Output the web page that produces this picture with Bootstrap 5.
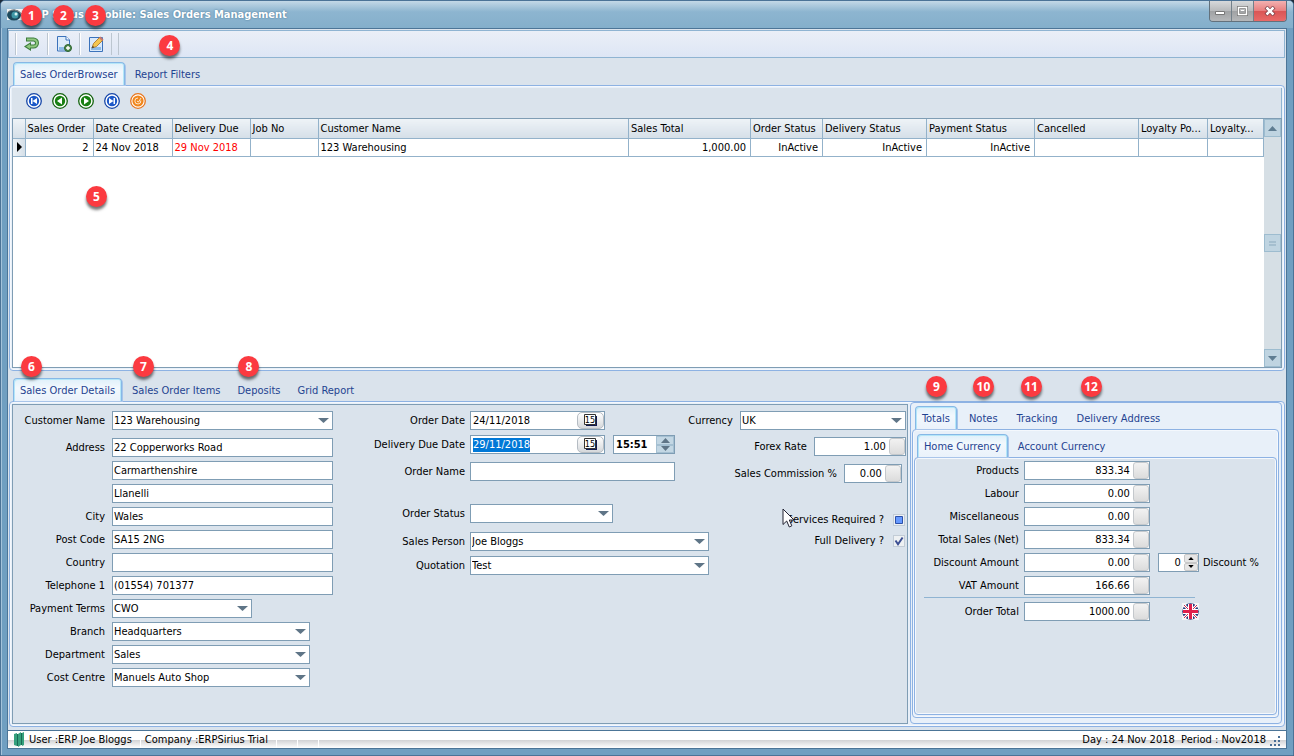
<!DOCTYPE html>
<html lang="en">
<head>
<meta charset="utf-8">
<meta name="viewport" content="width=device-width, initial-scale=1">
<title>Sales Orders Management</title>
<link href="https://cdn.jsdelivr.net/npm/bootstrap@5.3.0/dist/css/bootstrap.min.css" rel="stylesheet">
<style>
:root{--face:#dae3ec;--line:#7f9db4;--tabline:#8db2e3;--pale:#e8f0f9;--tabtext:#1f4391;--fieldw:221px}
body{font:11px/14px "DejaVu Sans Condensed","DejaVu Sans",sans-serif;color:#000;background:#1d2b3a;margin:0}
svg{display:block}
button{font:inherit}
.app-window{min-height:100vh;background:#709fc1;border:1px solid #4b7397;border-radius:5px 5px 0 0;padding:0 6px 6px;box-shadow:inset 1px 0 #a4c3da}
.titlebar{height:27px;margin:0 -6px;padding:0 6px;background:linear-gradient(#c3d8e7,#8db5d0 40%,#84afcb);border-radius:4px 4px 0 0;color:#fff;font-weight:bold;text-shadow:0 0 2px #44718f}
.win-buttons{height:21px;border:1px solid #63717c;border-top:0;border-radius:0 0 4px 4px;overflow:hidden}
.win-buttons button{width:22px;height:20px;border:0;border-right:1px solid #73808a;padding:0;background:linear-gradient(#d7d9db,#b8babc 48%,#9fa1a3 50%,#b5b7b9)}
.win-buttons .close-btn{width:32px;border-right:0;background:linear-gradient(#f2b1b1,#e88080 48%,#d95555 50%,#e96a68)}
.client{flex:1;background:var(--face);border:1px solid #4c7597;padding-top:1px}
.toolstrip{height:28px;border:1px solid #8fb4d2;background:linear-gradient(#eaeff7,#dde6f5);padding-left:6px;margin-right:1px}
.toolstrip button{width:32px;height:22px;border:0;border-left:1px solid #bcc6d0;padding:0;background:none;box-shadow:inset 1px 0 #fff}
.toolstrip .grip{width:8px;height:22px;border:solid #bcc6d0;border-width:0 1px}
.marker{position:absolute;z-index:3;width:21px;height:21px;border-radius:50%;background:#fb3a40;color:#fff;font:bold 12px/21px "Noto Sans","Open Sans",sans-serif;text-align:center;box-shadow:0 3px 3px rgba(0,0,0,.55);pointer-events:none}
.tool-mark{left:5px;top:-28px}
.tab-mark{left:7px;top:-23px}
.side-mark{left:10px;top:-31px}
.mid-mark{left:50%;margin-left:-8px;top:-28px}
.grid-mark{left:73px;top:67px}
.tabset{gap:1px;padding-left:5px;border:0;position:relative;z-index:1}
.tabset .nav-link{height:23px;padding:4px 6px 3px;border:1px solid transparent;border-radius:4px 4px 0 0;color:var(--tabtext);line-height:16px;margin:0;position:relative;white-space:nowrap}
.tabset .nav-link.active{color:var(--tabtext);border-color:#86b8e6;border-bottom:0;background:linear-gradient(#dff0fa,#f2f8fd 40%,#eaf2fb);box-shadow:inset 1px 1px #b4e6f8,inset -1px 0 #b4e6f8,1px 1px #a9c5ea;padding-bottom:4px}
.tabset .nav-item+.nav-item{margin-left:2px}
.pane{border:1px solid var(--tabline);border-radius:4px;box-shadow:inset 0 0 0 1px #f4f8fd;background:var(--pale);padding:2px}
.browser-pane{flex:1;margin:0 1px}
.nav-strip{height:30px;padding:0 0 4px 14px;gap:10px;background:var(--face);border-right:1px solid #8fb4d2}
.nav-strip button{border:0;padding:0;background:none}
.grid-box{flex:1;border:1px solid var(--line);background:#fff;min-height:180px}
.order-grid{table-layout:fixed;width:100%;margin:0;line-height:14px}
.order-grid th,.order-grid td{height:18px;padding:2px 2px 1px;font-weight:normal;border:1px solid #93b2ca;border-width:0 1px 1px 0;white-space:nowrap;overflow:hidden}
.order-grid th{background:linear-gradient(#eef3f7,#d5dfe8);height:19px}
.order-grid .num{text-align:right;padding-right:4px}
.order-grid .late{color:#f00}
.order-grid .row-head{background:linear-gradient(90deg,#eef3f7,#d5dfe8);padding:0 0 0 3px}
.c-ind{width:12px}.c-68{width:68px}.c-69{width:69px}.c-79{width:79px}.c-78{width:78px}.c-122{width:122px}.c-72{width:72px}.c-104{width:104px}.c-108{width:108px}.c-56{width:56px}
.vscroll{width:17px;flex:none;background:#d6dfe5}
.vscroll button{height:18px;border:1px solid #9dbccf;padding:0;background:#bfd4e1}
.details-row{margin-top:7px}
.details-pane{margin:0 1px 3px}
.details-box{flex:1 1 0;min-width:0;border:1px solid var(--line);background:var(--face);padding:6px 1px 36px 0;gap:32px}
.fields{gap:4px}
.fields.loose{gap:5px}
.t2{margin-top:2px}.t3{margin-top:3px}.t4{margin-top:4px}.t18{margin-top:18px}
.f-row{display:flex;align-items:center;height:19px}
.f-row>label{text-align:right;white-space:nowrap;margin-right:7px;flex:none}
.lab-a>.f-row>label{width:92px}
.lab-b{flex:1 1 0;min-width:0}
.lab-b>.f-row>label{width:100px;margin-right:5px}
.lab-c>.f-row>label{width:104px;margin-right:5px}
.ticks{gap:2px;margin-top:22px}
.fld{flex:none;height:19px;border:1px solid var(--line);border-radius:0;background:#fff;color:#000;padding:0 0 1px 1px;font:inherit;min-width:0;outline:0}
.combo input::selection{background:#0078d7;color:#fff}
.wide{width:var(--fieldw)}
.w140{width:140px}.w198{width:198px}.w205{width:205px}.w143{width:143px}.w239{width:239px}.w166{width:166px}.w126{width:126px}.w92{width:92px}.w58{width:58px}.w135{width:135px}.w62{width:62px}.w41{width:41px}
select.fld{appearance:none;padding:0 0 0 1px;background:#fff url("data:image/svg+xml,%3Csvg xmlns='http://www.w3.org/2000/svg' width='11' height='5'%3E%3Cpath d='M0 0h11L5.500 5z' fill='%235f7587'/%3E%3C/svg%3E") no-repeat right 3px center}
.combo{display:flex;align-items:stretch;padding:0}
.combo input{flex:1;width:0;border:0;outline:0;padding:0 0 0 2px;font:inherit;background:none}
.combo .right{text-align:right;padding-right:3px}
.combo .pop{width:16px;margin:0;border:1px solid #c4c8cc;border-radius:3px;background:linear-gradient(#f2f2f2,#dcdcdc);padding:0}
.combo .cal{width:27px;border:1px solid #b5bcc3;border-radius:5px;background:linear-gradient(#fff,#d5d8db);padding:0 0 0 6px}
.cal text{font:9px "DejaVu Sans Condensed",sans-serif}
.spin{display:flex;flex-direction:column;width:18px}
.spin button{flex:1;border:1px solid #a5c0d2;background:#c3d7e4;padding:0;display:flex;align-items:center;justify-content:center;min-height:0}
.spin.grey{width:14px}.spin.grey button{background:#e6e6e6;border-color:#c8c8c8;border-radius:2px}
.tick{appearance:none;width:12px;height:12px;border:1px solid #c2ccd6;background:#eef1f3 center/10px no-repeat;margin:0 1px 0 9px;flex:none}
.tick.filled{background-image:url("data:image/svg+xml,%3Csvg xmlns='http://www.w3.org/2000/svg' width='10' height='10'%3E%3Cpath d='M1.500 1.500h7v7h-7z' fill='%236699ff' stroke='%232d51a8'/%3E%3C/svg%3E")}
.tick.checked{background-image:url("data:image/svg+xml,%3Csvg xmlns='http://www.w3.org/2000/svg' width='10' height='10'%3E%3Cpath d='M1.500 4.500L4 8.200 8.600 1.500' fill='none' stroke='%233c4f93' stroke-width='2'/%3E%3C/svg%3E")}
.pointer{position:absolute;left:-5px;top:-2px}
.totals-side{flex:0 0 29.3%;min-width:0;margin:-2px 0 0 2px;border:1px solid var(--tabline);border-radius:4px;background:var(--pale);padding:3px 2px 5px 1px}
.totals-side .tabset{padding-left:3px}
.totals-side>.tabset{gap:3px}
.totals-pane{flex:1;padding:4px 1px 2px}
.currency-pane{flex:1;background:var(--face);padding:3px 0 0}
.rule{border-top:1px solid #8fb4d2;width:271px;margin:-2px 0 0 9px}
.statusbar{height:19px;margin:0 -1px -1px;padding:0 4px 0 6px;border:1px solid #4c7597;background:linear-gradient(#fff 50%,#d0d1d3 52%,#fff)}
.cell{border-right:1px solid #fff;height:17px;line-height:17px;white-space:pre}
.w21{width:21px}
</style>
</head>
<body>
<svg width="0" height="0" class="position-absolute" aria-hidden="true">
 <symbol id="up" viewBox="0 0 9 5"><path d="M0 5h9L4.500 0z"/></symbol>
 <symbol id="down" viewBox="0 0 9 5"><path d="M0 0h9L4.500 5z"/></symbol>
 <symbol id="cal" viewBox="0 0 13 13"><path d="M2 2h11v10H2z" fill="#111a50"/><path d="M.5.500h11v10H.5z" fill="#fff" stroke="#333"/></symbol>
</svg>
<div class="app-window d-flex flex-column">
 <header class="titlebar d-flex justify-content-between align-items-start">
  <div class="d-flex align-items-center h-100 gap-1">
   <svg width="16" height="14" viewBox="0 0 16 14"><path d="M0 1h16v11H0z" fill="#f4f4f4"/><ellipse cx="7" cy="7" rx="7" ry="5.500" fill="#1e4a5d"/><circle cx="8" cy="7" r="3.500" fill="#3f97a6"/><circle cx="9" cy="6" r="1.500" fill="#d4f2f2"/><path d="M1 4Q7-1 15 6" fill="none" stroke="#888"/></svg>
   <span>ERP Sirius - Mobile: Sales Orders Management</span>
  </div>
  <div class="win-buttons d-flex">
   <button type="button" aria-label="Minimise"><svg class="m-auto" width="11" height="10"><path d="M.5 5.500h9v3h-9z" fill="#fff" stroke="#777"/></svg></button>
   <button type="button" aria-label="Maximise"><svg class="m-auto" width="11" height="10"><path d="M1.500 1.500h8v7h-8z" fill="none" stroke="#777" stroke-width="3"/><path d="M1.500 1.500h8v7h-8z" fill="none" stroke="#fff" stroke-width="1.500"/><path d="M4 4.500h3" stroke="#fff"/></svg></button>
   <button type="button" class="close-btn" aria-label="Close"><svg class="m-auto" width="12" height="10"><path d="M2 1l8 8M10 1L2 9" stroke="#7a3c44" stroke-width="4"/><path d="M2.500 1.500l7 7M9.500 1.500l-7 7" stroke="#fff" stroke-width="2.500"/></svg></button>
  </div>
 </header>
 <main class="client d-flex flex-column">
  <div class="toolstrip d-flex align-items-center">
   <button type="button" class="position-relative" aria-label="Back"><svg class="m-auto" width="18" height="16" viewBox="0 0 18 16"><path d="M3 3.500h7.500a3.500 3.500 0 0 1 0 7H6" fill="none" stroke="#3c7d3c" stroke-width="4"/><path d="M8 6v9L1 10.500z" fill="#3c7d3c"/><path d="M4 3.500h6.500a3.500 3.500 0 0 1 0 7H5" fill="none" stroke="#8fc77f" stroke-width="2"/><path d="M7 8v5L3 10.500z" fill="#8fc77f"/></svg><span class="marker tool-mark">1</span></button>
   <button type="button" class="position-relative" aria-label="New order"><svg class="m-auto" width="16" height="16" viewBox="0 0 16 16"><path d="M1.500.500H10L13.500 4v11h-12z" fill="#dcebfa" stroke="#3b72bb"/><path d="M3 11h8v3H3z" fill="#8dbbe8"/><path d="M10 .5V4h3.500" fill="#fff" stroke="#3b72bb"/><circle cx="12" cy="12" r="3.500" fill="#4d8a4b" stroke="#2f6430"/><path d="M12 10v4M10 12h4" stroke="#fff" stroke-width="1.400"/></svg><span class="marker tool-mark">2</span></button>
   <button type="button" class="position-relative" aria-label="Edit order"><svg class="m-auto" width="16" height="16" viewBox="0 0 16 16"><path d="M1.500 1.500h13v14h-13z" fill="#d9e9fa" stroke="#3b72bb"/><path d="M3 11h10v3H3z" fill="#8dbbe8"/><path d="M4 12l1.500-4.500L12 1l3 3-6.500 6.500z" fill="#f4c64f" stroke="#a66d23" stroke-width=".8"/><path d="M4 12l.8-2.200 1.400 1.400z" fill="#333"/><path d="M11 2l3 3 1.500-1.500-3-3z" fill="#c97870"/></svg><span class="marker tool-mark">3</span></button>
   <div class="grip"></div>
  </div>
  <ul class="nav nav-tabs tabset mt-1">
   <li class="nav-item"><button type="button" class="nav-link active">Sales OrderBrowser</button></li>
   <li class="nav-item"><button type="button" class="nav-link">Report Filters<span class="marker mid-mark">4</span></button></li>
  </ul>
  <section class="pane browser-pane d-flex flex-column">
   <div class="nav-strip d-flex align-items-center">
    <button type="button" aria-label="First"><svg width="16" height="16" viewBox="0 0 16 16"><circle cx="8" cy="8" r="7.300" fill="#fff" stroke="#1646a8" stroke-width="1.300"/><circle cx="8" cy="8" r="5.200" fill="#1c58c8"/><path d="M5 5h1.500v6H5zM11 5v6L6.500 8z" fill="#fff"/></svg></button>
    <button type="button" aria-label="Previous"><svg width="16" height="16" viewBox="0 0 16 16"><circle cx="8" cy="8" r="7.300" fill="#fff" stroke="#12630e" stroke-width="1.300"/><circle cx="8" cy="8" r="5.200" fill="#188012"/><path d="M10 4.500v7L5 8z" fill="#fff"/></svg></button>
    <button type="button" aria-label="Next"><svg width="16" height="16" viewBox="0 0 16 16"><circle cx="8" cy="8" r="7.300" fill="#fff" stroke="#12630e" stroke-width="1.300"/><circle cx="8" cy="8" r="5.200" fill="#188012"/><path d="M6 4.500v7L11 8z" fill="#fff"/></svg></button>
    <button type="button" aria-label="Last"><svg width="16" height="16" viewBox="0 0 16 16"><circle cx="8" cy="8" r="7.300" fill="#fff" stroke="#1646a8" stroke-width="1.300"/><circle cx="8" cy="8" r="5.200" fill="#1c58c8"/><path d="M11 5H9.500v6H11zM5 5v6l4.500-3z" fill="#fff"/></svg></button>
    <button type="button" aria-label="Refresh"><svg width="16" height="16" viewBox="0 0 16 16"><circle cx="8" cy="8" r="7.300" fill="#fff" stroke="#e8761e" stroke-width="1.300"/><circle cx="8" cy="8" r="5.600" fill="#f0861c"/><path d="M10.800 7.500A3 3 0 1 1 8 5" fill="none" stroke="#ffe9cf"/><path d="M7 8l1.500 1L11 5" fill="none" stroke="#ffe9cf"/></svg></button>
   </div>
   <div class="grid-box d-flex position-relative">
    <div class="flex-grow-1">
     <table class="order-grid">
      <colgroup><col class="c-ind"><col class="c-68"><col class="c-79"><col class="c-78"><col class="c-68"><col><col class="c-122"><col class="c-72"><col class="c-104"><col class="c-108"><col class="c-104"><col class="c-69"><col class="c-56"></colgroup>
      <thead><tr><th></th><th>Sales Order</th><th>Date Created</th><th>Delivery Due</th><th>Job No</th><th>Customer Name</th><th>Sales Total</th><th>Order Status</th><th>Delivery Status</th><th>Payment Status</th><th>Cancelled</th><th>Loyalty Po...</th><th>Loyalty...</th></tr></thead>
      <tbody><tr><td class="row-head"><svg width="6" height="10"><path d="M1 0l5 5-5 5z"/></svg></td><td class="num">2</td><td>24 Nov 2018</td><td class="late">29 Nov 2018</td><td></td><td>123 Warehousing</td><td class="num">1,000.00</td><td class="num">InActive</td><td class="num">InActive</td><td class="num">InActive</td><td></td><td></td><td></td></tr></tbody>
     </table>
    </div>
    <div class="vscroll d-flex flex-column justify-content-between">
     <button type="button" aria-label="Scroll up"><svg class="m-auto" width="9" height="5" fill="#5f7d92"><use href="#up"/></svg></button>
     <button type="button" aria-label="Scroll position"><svg class="m-auto" width="7" height="5"><path d="M0 1h7M0 4h7" stroke="#8aa9bd"/></svg></button>
     <button type="button" aria-label="Scroll down"><svg class="m-auto" width="9" height="5" fill="#5f7d92"><use href="#down"/></svg></button>
    </div>
    <span class="marker grid-mark">5</span>
   </div>
  </section>
  <ul class="nav nav-tabs tabset details-row">
   <li class="nav-item"><button type="button" class="nav-link active">Sales Order Details<span class="marker tab-mark">6</span></button></li>
   <li class="nav-item"><button type="button" class="nav-link">Sales Order Items<span class="marker tab-mark">7</span></button></li>
   <li class="nav-item"><button type="button" class="nav-link">Deposits<span class="marker tab-mark">8</span></button></li>
   <li class="nav-item"><button type="button" class="nav-link">Grid Report</button></li>
  </ul>
  <section class="pane details-pane d-flex">
   <form class="details-box d-flex">
    <div class="fields lab-a d-flex flex-column">
     <div class="f-row"><label for="cust">Customer Name</label><select id="cust" class="fld wide"><option>123 Warehousing</option></select></div>
     <div class="f-row t4"><label for="ad1">Address</label><input id="ad1" class="fld wide" value="22 Copperworks Road"></div>
     <div class="f-row"><label for="ad2"></label><input id="ad2" aria-label="Address line 2" class="fld wide" value="Carmarthenshire"></div>
     <div class="f-row"><label for="ad3"></label><input id="ad3" aria-label="Address line 3" class="fld wide" value="Llanelli"></div>
     <div class="f-row"><label for="city">City</label><input id="city" class="fld wide" value="Wales"></div>
     <div class="f-row"><label for="post">Post Code</label><input id="post" class="fld wide" value="SA15 2NG"></div>
     <div class="f-row"><label for="ctry">Country</label><input id="ctry" class="fld wide"></div>
     <div class="f-row"><label for="tel">Telephone 1</label><input id="tel" class="fld wide" value="(01554) 701377"></div>
     <div class="f-row"><label for="terms">Payment Terms</label><select id="terms" class="fld w140"><option>CWO</option></select></div>
     <div class="f-row"><label for="branch">Branch</label><select id="branch" class="fld w198"><option>Headquarters</option></select></div>
     <div class="f-row"><label for="dept">Department</label><select id="dept" class="fld w198"><option>Sales</option></select></div>
     <div class="f-row"><label for="cost">Cost Centre</label><select id="cost" class="fld w198"><option>Manuels Auto Shop</option></select></div>
    </div>
    <div class="fields loose lab-b d-flex flex-column">
     <div class="f-row"><label for="odate">Order Date</label><div class="fld combo w135"><input id="odate" value="24/11/2018"><button type="button" class="cal" aria-label="Pick order date"><svg width="13" height="13"><use href="#cal"/><text x="6" y="9" text-anchor="middle">15</text></svg></button></div></div>
     <div class="f-row"><label for="ddate">Delivery Due Date</label><div class="fld combo w135"><input id="ddate" value="29/11/2018"><button type="button" class="cal" aria-label="Pick delivery date"><svg width="13" height="13"><use href="#cal"/><text x="6" y="9" text-anchor="middle">15</text></svg></button></div>
      <div class="fld combo w62 ms-2"><input value="15:51" class="fw-bold" aria-label="Delivery time"><span class="spin"><button type="button" aria-label="Later"><svg width="9" height="5" fill="#5f7587"><use href="#up"/></svg></button><button type="button" aria-label="Earlier"><svg width="9" height="5" fill="#5f7587"><use href="#down"/></svg></button></span></div></div>
     <div class="f-row t3"><label for="oname">Order Name</label><input id="oname" class="fld w205"></div>
     <div class="f-row t18"><label for="ostat">Order Status</label><select id="ostat" class="fld w143"><option></option></select></div>
     <div class="f-row t4"><label for="person">Sales Person</label><select id="person" class="fld w239"><option>Joe Bloggs</option></select></div>
     <div class="f-row"><label for="quote">Quotation</label><select id="quote" class="fld w239"><option>Test</option></select></div>
    </div>
    <div class="fields loose d-flex flex-column align-items-end">
     <div class="f-row"><label for="curr">Currency</label><select id="curr" class="fld w166"><option>UK</option></select></div>
     <div class="f-row t2"><label for="forex">Forex Rate</label><div class="fld combo w92"><input id="forex" class="right" value="1.00"><button type="button" class="pop" aria-label="Calculator"></button></div></div>
     <div class="f-row t3"><label for="comm">Sales Commission %</label><div class="fld combo w58 me-1"><input id="comm" class="right" value="0.00"><button type="button" class="pop" aria-label="Calculator"></button></div></div>
     <div class="ticks d-flex flex-column align-items-end">
      <div class="f-row position-relative"><label for="serv" class="me-0">Services Required ?</label><input type="checkbox" id="serv" class="tick filled"><svg class="pointer" width="13" height="20"><path d="M1 1v15.500l3.700-3.500 2.600 6 2.500-1.200L7.300 12H12z" fill="#fff" stroke="#223" stroke-linejoin="round"/></svg></div>
      <div class="f-row"><label for="full" class="me-0">Full Delivery ?</label><input type="checkbox" id="full" class="tick checked" checked></div>
     </div>
    </div>
   </form>
   <aside class="totals-side d-flex flex-column">
    <ul class="nav nav-tabs tabset flex-nowrap">
     <li class="nav-item"><button type="button" class="nav-link active">Totals<span class="marker side-mark">9</span></button></li>
     <li class="nav-item"><button type="button" class="nav-link">Notes<span class="marker side-mark">10</span></button></li>
     <li class="nav-item"><button type="button" class="nav-link">Tracking<span class="marker side-mark">11</span></button></li>
     <li class="nav-item"><button type="button" class="nav-link">Delivery Address<span class="marker side-mark">12</span></button></li>
    </ul>
    <div class="pane totals-pane d-flex flex-column">
     <ul class="nav nav-tabs tabset flex-nowrap">
      <li class="nav-item"><button type="button" class="nav-link active">Home Currency</button></li>
      <li class="nav-item"><button type="button" class="nav-link">Account Currency</button></li>
     </ul>
     <div class="pane currency-pane">
      <div class="fields lab-c d-flex flex-column">
       <div class="f-row"><label for="t1">Products</label><div class="fld combo w126"><input id="t1" class="right" value="833.34"><button type="button" class="pop" aria-label="Calculator"></button></div></div>
       <div class="f-row"><label for="t2">Labour</label><div class="fld combo w126"><input id="t2" class="right" value="0.00"><button type="button" class="pop" aria-label="Calculator"></button></div></div>
       <div class="f-row"><label for="t3">Miscellaneous</label><div class="fld combo w126"><input id="t3" class="right" value="0.00"><button type="button" class="pop" aria-label="Calculator"></button></div></div>
       <div class="f-row"><label for="t4">Total Sales (Net)</label><div class="fld combo w126"><input id="t4" class="right" value="833.34"><button type="button" class="pop" aria-label="Calculator"></button></div></div>
       <div class="f-row"><label for="t5">Discount Amount</label><div class="fld combo w126"><input id="t5" class="right" value="0.00"><button type="button" class="pop" aria-label="Calculator"></button></div>
        <div class="fld combo w41 ms-2 me-1"><input id="disc" class="right" value="0"><span class="spin grey"><button type="button" aria-label="Increase"><svg width="6" height="3"><use href="#up"/></svg></button><button type="button" aria-label="Decrease"><svg width="6" height="3"><use href="#down"/></svg></button></span></div><label for="disc" class="w-auto">Discount %</label></div>
       <div class="f-row"><label for="t6">VAT Amount</label><div class="fld combo w126"><input id="t6" class="right" value="166.66"><button type="button" class="pop" aria-label="Calculator"></button></div></div>
       <div class="rule t3"></div>
       <div class="f-row"><label for="t7">Order Total</label><div class="fld combo w126 me-4"><input id="t7" class="right" value="1000.00"><button type="button" class="pop" aria-label="Calculator"></button></div>
        <svg class="ms-2" width="17" height="17" viewBox="0 0 17 17"><path d="M0 0h17v17H0z" fill="#f2f4f6"/><circle cx="8.500" cy="8.500" r="8.300" fill="#273a7c"/><path d="M2 2l13 13M15 2L2 15" stroke="#fff" stroke-width="2.500"/><path d="M2 2l13 13M15 2L2 15" stroke="#d4284c"/><path d="M8.500 1v15M1 8.500h15" stroke="#fff" stroke-width="5"/><path d="M8.500 1v15M1 8.500h15" stroke="#e01f4b" stroke-width="3"/></svg></div>
      </div>
     </div>
    </div>
   </aside>
  </section>
  <footer class="statusbar d-flex align-items-center">
   <svg width="11" height="15"><path d="M0 2l3-1v13l-3-1zM4 2l3-2v13l-3 2zM8 1l2-1v13l-2 1z" fill="#35a07c"/><path d="M3.500 2v12M7.500 1v12" stroke="#186a55"/></svg>
   <span class="cell ps-1 pe-2">User :ERP Joe Bloggs</span><span class="cell pe-2 ps-1">Company :ERPSirius Trial</span><span class="cell w21"></span><span class="cell w21"></span>
   <span class="ms-auto">Day : 24 Nov 2018&nbsp; Period : Nov2018</span>
   <svg class="ms-1 mt-1" width="12" height="12" fill="#4a6f96"><path d="M8 0h2v2H8zM4 4h2v2H4zM8 4h2v2H8zM0 8h2v2H0zM4 8h2v2H4zM8 8h2v2H8z"/></svg>
  </footer>
 </main>
</div>
<script src="https://cdn.jsdelivr.net/npm/bootstrap@5.3.0/dist/js/bootstrap.bundle.min.js"></script>
<script>
const due = document.getElementById('ddate');
due.focus();
due.select();
</script>
</body>
</html>
